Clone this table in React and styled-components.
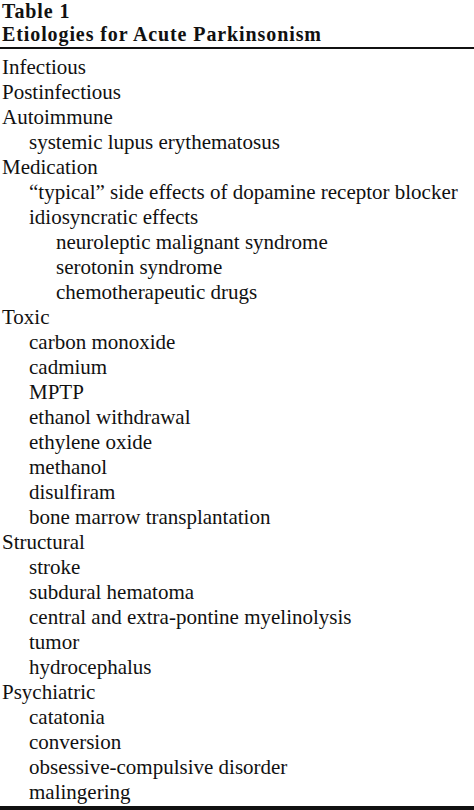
import styled, { createGlobalStyle } from 'styled-components'

const Global = createGlobalStyle`
  html, body {
    margin: 0;
    padding: 0;
    background: #ffffff;
  }
`

const Page = styled.div`
  width: 474px;
  height: 810px;
  overflow: hidden;
  background: #ffffff;
  color: #111111;
  font-family: "Liberation Serif", "Times New Roman", serif;
`

const Caption = styled.div`
  display: flex;
  flex-direction: column;
  height: 47px;
  padding-left: 2px;
  font-weight: bold;
  font-size: 20px;
  letter-spacing: 0.9px;
`

const CaptionLine = styled.div`
  line-height: ${(props) => props.lh};
  white-space: nowrap;
`

const Rule = styled.div`
  height: ${(props) => props.thick}px;
  background: #111111;
`

const List = styled.div`
  display: flex;
  flex-direction: column;
  padding-top: 6px;
  padding-bottom: 1px;
`

const Row = styled.div`
  height: 25px;
  line-height: 25px;
  font-size: 21px;
  white-space: nowrap;
  padding-left: ${(props) => 2 + props.level * 27}px;
`

const rows = [
  ['Infectious', 0],
  ['Postinfectious', 0],
  ['Autoimmune', 0],
  ['systemic lupus erythematosus', 1],
  ['Medication', 0],
  ['\u201ctypical\u201d side effects of dopamine receptor blocker', 1],
  ['idiosyncratic effects', 1],
  ['neuroleptic malignant syndrome', 2],
  ['serotonin syndrome', 2],
  ['chemotherapeutic drugs', 2],
  ['Toxic', 0],
  ['carbon monoxide', 1],
  ['cadmium', 1],
  ['MPTP', 1],
  ['ethanol withdrawal', 1],
  ['ethylene oxide', 1],
  ['methanol', 1],
  ['disulfiram', 1],
  ['bone marrow transplantation', 1],
  ['Structural', 0],
  ['stroke', 1],
  ['subdural hematoma', 1],
  ['central and extra-pontine myelinolysis', 1],
  ['tumor', 1],
  ['hydrocephalus', 1],
  ['Psychiatric', 0],
  ['catatonia', 1],
  ['conversion', 1],
  ['obsessive-compulsive disorder', 1],
  ['malingering', 1],
]

export default function App() {
  return (
    <Page>
      <Global />
      <Caption>
        <CaptionLine lh="normal">Table 1</CaptionLine>
        <CaptionLine lh="22px">Etiologies for Acute Parkinsonism</CaptionLine>
      </Caption>
      <Rule thick={2} />
      <List>
        {rows.map(([text, level]) => (
          <Row key={text} level={level}>{text}</Row>
        ))}
      </List>
      <Rule thick={4} />
    </Page>
  )
}
